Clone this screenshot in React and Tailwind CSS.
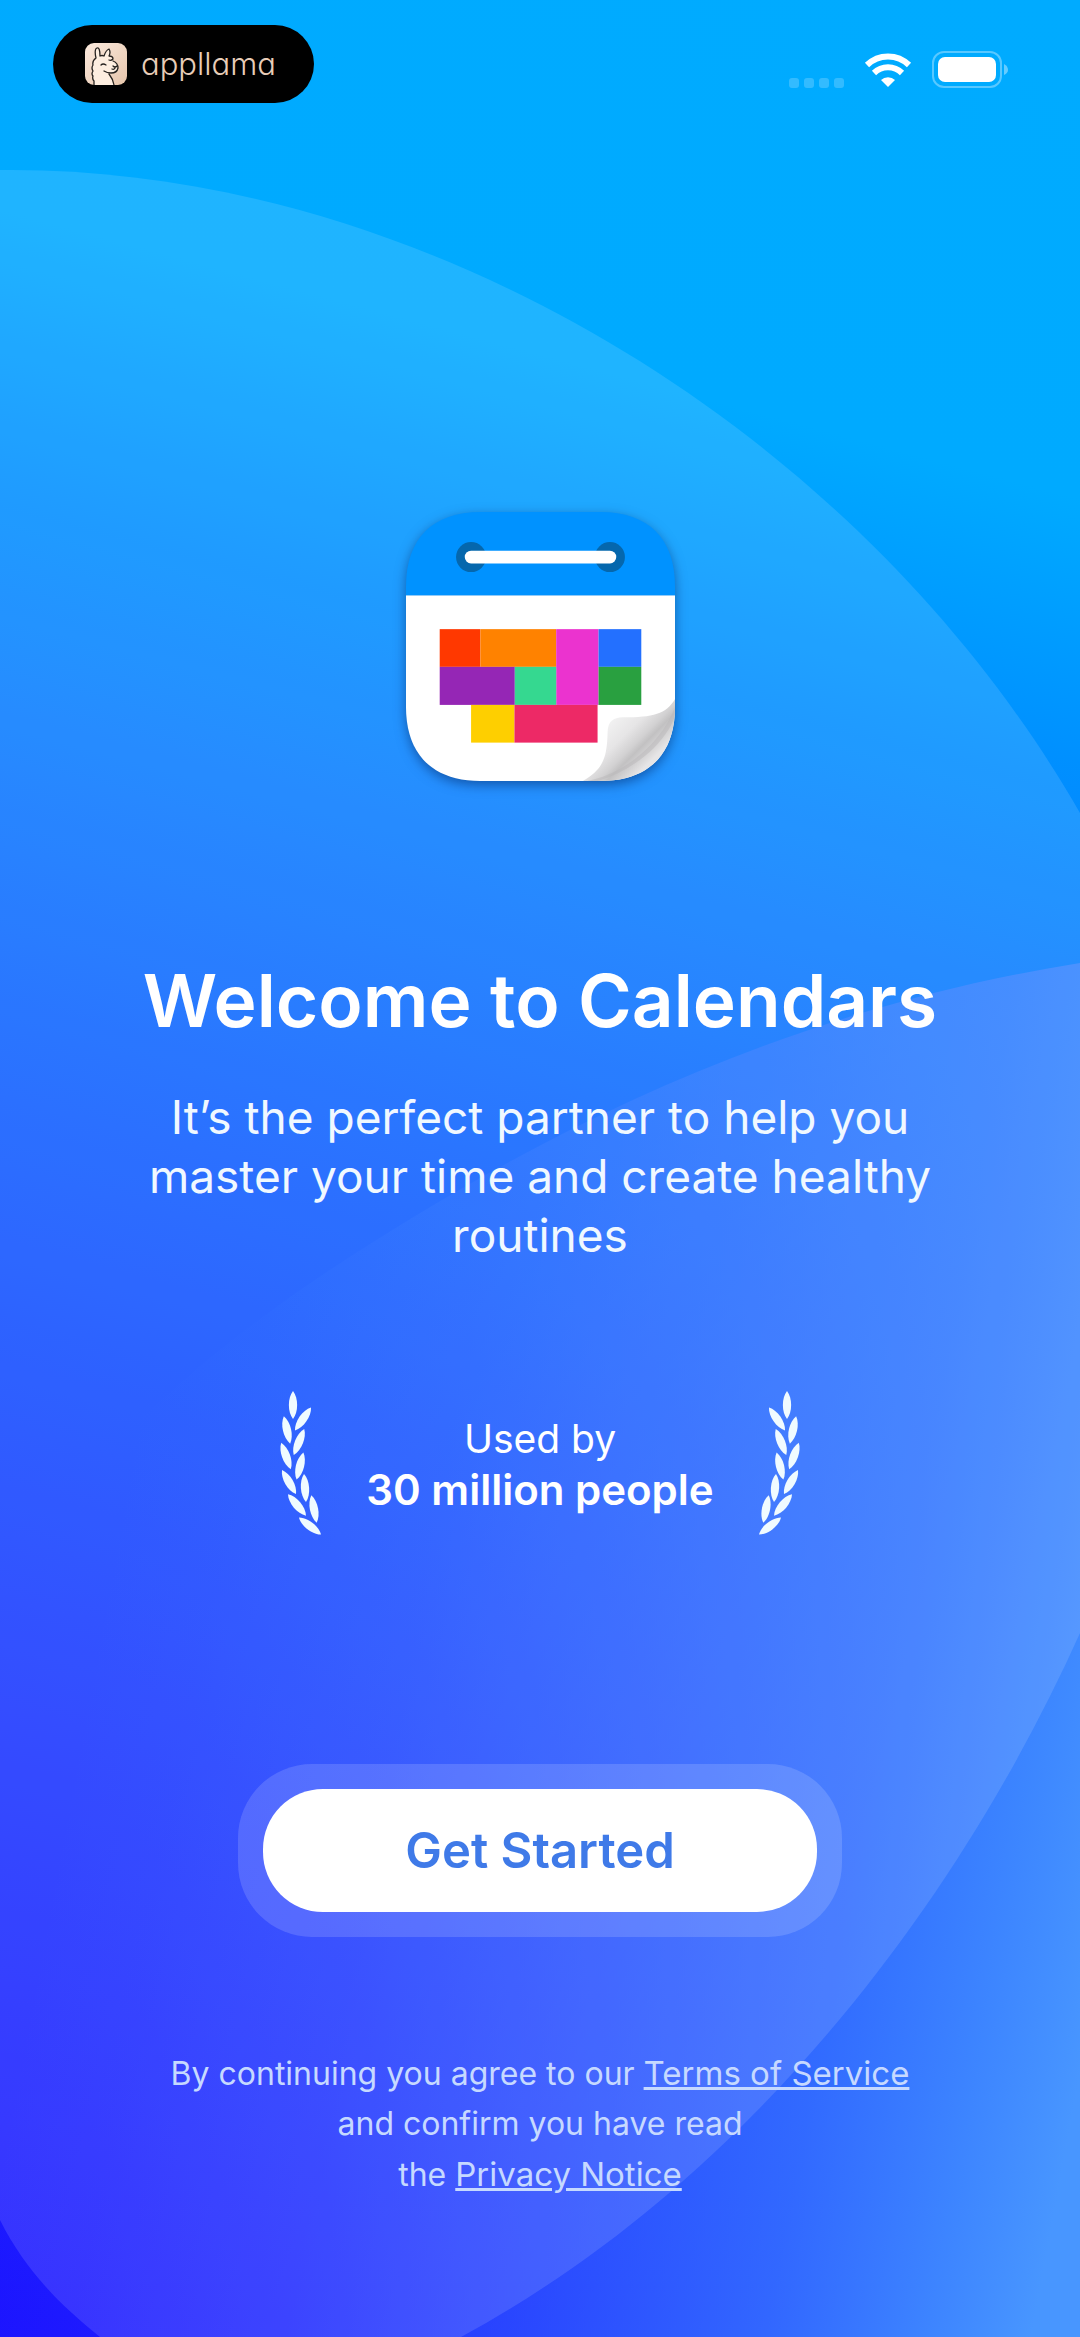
import React from 'react';

// one branch of the laurel, each leaf is [x, y, angle]
const leaves = [
    [13, 13, 0],
    [23, 27, 35],
    [7, 38, -13],
    [19, 50, 22],
    [6, 64, -20],
    [20, 74, 14],
    [9, 90, -30],
    [25, 96, -4],
    [17, 113, -40],
    [34, 117, -11],
    [30, 134, -52],
];

const Laurel = ({ className }) => (
    <svg className={`h-[144px] w-[42px] shrink-0 overflow-visible fill-[#f0fbff] ${className}`} viewBox="0 0 42 144" aria-hidden="true">
        {leaves.map(([x, y, angle]) => (
            <path
                key={`${x}-${y}`}
                d="M0 -14 C5.5 -7 5.5 7 0 14 C-5.5 7 -5.5 -7 0 -14Z"
                transform={`translate(${x} ${y}) rotate(${angle})`}
            />
        ))}
    </svg>
);

const Backdrop = () => (
    <svg className="absolute inset-0 -z-10 h-full w-full" viewBox="0 0 1080 2337" preserveAspectRatio="none" aria-hidden="true">
        <defs>
            <linearGradient id="sky" gradientUnits="userSpaceOnUse" x1="868" y1="-57" x2="212" y2="2394">
                <stop offset="0" stopColor="#00abff" />
                <stop offset="0.19" stopColor="#00aaff" />
                <stop offset="0.29" stopColor="#0090ff" />
                <stop offset="0.4" stopColor="#0a78ff" />
                <stop offset="0.5" stopColor="#0d62ff" />
                <stop offset="0.61" stopColor="#114eff" />
                <stop offset="0.76" stopColor="#1835ff" />
                <stop offset="0.92" stopColor="#1b1eff" />
                <stop offset="1" stopColor="#1c13ff" />
            </linearGradient>
            <linearGradient id="glow" gradientUnits="userSpaceOnUse" x1="130" y1="1450" x2="1160" y2="1640">
                <stop offset="0" stopColor="#3a80ff" stopOpacity="0" />
                <stop offset="0.1" stopColor="#3a80ff" stopOpacity="0.04" />
                <stop offset="0.3" stopColor="#3a78ff" stopOpacity="0.2" />
                <stop offset="0.52" stopColor="#3a78ff" stopOpacity="0.48" />
                <stop offset="0.75" stopColor="#3a80ff" stopOpacity="0.74" />
                <stop offset="0.9" stopColor="#3f8aff" stopOpacity="0.94" />
                <stop offset="1" stopColor="#4896ff" />
            </linearGradient>
        </defs>
        <rect width="1080" height="2337" fill="url(#sky)" />
        <path d="M1080 963 C780 1010 520 1140 300 1290 C100 1430 0 1560 0 1700 V2337 H1080Z" fill="url(#glow)" />
        <path
            d="M0 170 C420 165 860 430 1080 813 V1633 C960 1900 750 2180 461 2337 H100 C60 2305 25 2270 0 2220Z"
            fill="#fff"
            fillOpacity="0.12"
        />
    </svg>
);

const LlamaIcon = () => (
    <svg className="h-[42px] w-[42px]" viewBox="0 0 42 42" aria-hidden="true">
        <defs>
            <linearGradient id="fur" x1="0" y1="0" x2="1" y2="1">
                <stop offset="0" stopColor="#fbeade" />
                <stop offset="1" stopColor="#e6c5ab" />
            </linearGradient>
        </defs>
        <rect width="42" height="42" rx="9" fill="url(#fur)" />
        <path
            d="M9 42 V38 Q7 36 8 33 Q6 31 8 28 Q6 25 8 22 Q7 18 11 15 Q9 6 12 5 Q15 4 15 13 Q17 12 19 13 Q21 7 24 6 Q26 9 24 14 Q28 14 28 18 Q33 20 33 25 Q32 30 26 30 Q25 31 23 30 Q27 36 29 42Z"
            fill="#fdeee0"
        />
        <g fill="none" stroke="#26221f" strokeWidth="1.3" strokeLinecap="round" strokeLinejoin="round">
            <path d="M9 42 V38 Q7 36 8 33 Q6 31 8 28 Q6 25 8 22 Q7 18 11 15 Q9 6 12 5 Q15 4 15 13 Q17 12 19 13 Q21 7 24 6 Q26 9 24 13 Q28 13 28 16 Q26 18 24 17" />
            <path d="M28 18 Q33 20 33 25 Q32 30 26 30 Q22 30 19 28 M24 31 Q28 36 29 42" />
            <path d="M16 22 Q18 20 21 22 M28 23 Q30 25 32 23 M30 25 Q29 27 27 26" />
        </g>
    </svg>
);

const CalendarIcon = () => (
    <svg className="h-[269px] w-[269px] overflow-visible drop-shadow-[0_4px_6px_rgba(0,30,90,0.5)]" viewBox="0 0 806 806" aria-hidden="true">
        <defs>
            <clipPath id="tile">
                <path d="M0 222 C0 80 80 0 222 0 H584 C726 0 806 80 806 222 V584 C806 726 726 806 584 806 H222 C80 806 0 726 0 584Z" />
            </clipPath>
            <linearGradient id="curl" gradientUnits="userSpaceOnUse" x1="610" y1="610" x2="740" y2="740">
                <stop offset="0" stopColor="#f4f4f4" />
                <stop offset="0.4" stopColor="#e6e5e6" />
                <stop offset="0.62" stopColor="#d2d1d2" />
                <stop offset="0.72" stopColor="#c2c1c2" />
                <stop offset="1" stopColor="#e6e5e6" />
            </linearGradient>
        </defs>
        <g clipPath="url(#tile)">
            <rect width="806" height="251" fill="#0092ff" />
            <rect y="250" width="806" height="556" fill="#fff" />
            <circle cx="195" cy="135" r="45" fill="#0567ad" />
            <circle cx="611" cy="135" r="45" fill="#0567ad" />
            <rect x="176" y="116" width="454" height="38" rx="19" fill="#fff" />
            <rect x="101" y="351" width="122" height="113" fill="#ff3800" />
            <rect x="223" y="351" width="227" height="113" fill="#ff8200" />
            <rect x="450" y="351" width="127" height="227" fill="#eb33cf" />
            <rect x="577" y="351" width="128" height="113" fill="#2370ff" />
            <rect x="101" y="464" width="225" height="114" fill="#9526b5" />
            <rect x="326" y="464" width="124" height="114" fill="#35d890" />
            <rect x="577" y="464" width="128" height="114" fill="#29a040" />
            <rect x="195" y="578" width="130" height="113" fill="#fecf00" />
            <rect x="325" y="578" width="249" height="113" fill="#ed2966" />
            <path d="M806 560 C780 605 740 615 650 615 C620 617 606 625 604 660 C602 740 590 770 530 806 H806Z" fill="url(#curl)" />
            <path d="M806 585 C770 680 670 780 545 806 H575 C690 770 780 690 806 610Z" fill="#b9b8b9" opacity="0.5" />
        </g>
    </svg>
);

const StatusBar = () => (
    <header className="flex items-start justify-between pt-[25px] pr-[72px] pl-[53px]">
        <div className="flex h-[78px] items-center gap-[14px] rounded-full bg-black pr-[38px] pl-8">
            <LlamaIcon />
            <span className="text-[31px] leading-8 font-light text-[#e8cdb8] [font-feature-settings:'cv11']">appllama</span>
        </div>
        <div className="flex items-end gap-5 pt-[26px]">
            <div className="flex gap-[5px]">
                <span className="size-[10px] rounded-[3px] bg-white/20"></span>
                <span className="size-[10px] rounded-[3px] bg-white/20"></span>
                <span className="size-[10px] rounded-[3px] bg-white/20"></span>
                <span className="size-[10px] rounded-[3px] bg-white/20"></span>
            </div>
            <svg className="h-[36px] w-[48px]" viewBox="0 0 48 36" fill="none" stroke="#fff" strokeWidth="6" aria-hidden="true">
                <path d="M3 13 A30 30 0 0 1 45 13" />
                <path d="M10 21 A20 20 0 0 1 38 21" />
                <path d="M24 35 L17 28 A10 10 0 0 1 31 28Z" fill="#fff" stroke="none" />
            </svg>
            <svg className="h-[37px] w-[76px]" viewBox="0 0 76 37" aria-hidden="true">
                <rect x="1" y="1" width="68" height="35" rx="11" fill="none" stroke="#fff" strokeOpacity="0.35" strokeWidth="2" />
                <rect x="6" y="6" width="58" height="25" rx="7" fill="#fff" />
                <path d="M72 13 Q76 15 76 19 Q76 22 72 24Z" fill="#fff" fillOpacity="0.4" />
            </svg>
        </div>
    </header>
);

const App = () => {
    return (
        <div className="relative isolate flex min-h-screen flex-col overflow-hidden bg-[#00abff] font-['Inter',sans-serif] text-white">
            <Backdrop />
            <StatusBar />
            <main className="flex flex-1 flex-col items-center text-center">
                <div className="mt-[409px]">
                    <CalendarIcon />
                </div>
                <h1 className="mt-[172px] text-[73px] leading-[96px] font-semibold">Welcome to Calendars</h1>
                <p className="mt-[39px] max-w-[800px] text-[46px] leading-[59px] text-[#f0f8ff]">
                    It’s the perfect partner to help you master your time and create healthy routines
                </p>
                <div className="mt-[127px] flex items-center gap-[44px]">
                    <Laurel />
                    <div className="leading-[51px]">
                        <p className="text-[39px]">Used by</p>
                        <p className="text-[42px] font-semibold">30 million people</p>
                    </div>
                    <Laurel className="-scale-x-100" />
                </div>
                <div className="mt-[228px] rounded-[74px] bg-white/15 p-[25px]">
                    <button type="button" className="h-[123px] w-[554px] rounded-[60px] bg-white text-[49px] font-semibold text-[#3f7ae8]">
                        Get Started
                    </button>
                </div>
                <p className="mt-[111px] pb-[120px] text-[32px] leading-[50px] text-[#c6d9ff]">
                    By continuing you agree to our <a href="#terms" className="text-[33px] underline">Terms of Service</a>
                    <br />
                    and confirm you have read
                    <br />
                    the <a href="#privacy" className="text-[33px] underline">Privacy Notice</a>
                </p>
            </main>
        </div>
    );
};

export default App;
